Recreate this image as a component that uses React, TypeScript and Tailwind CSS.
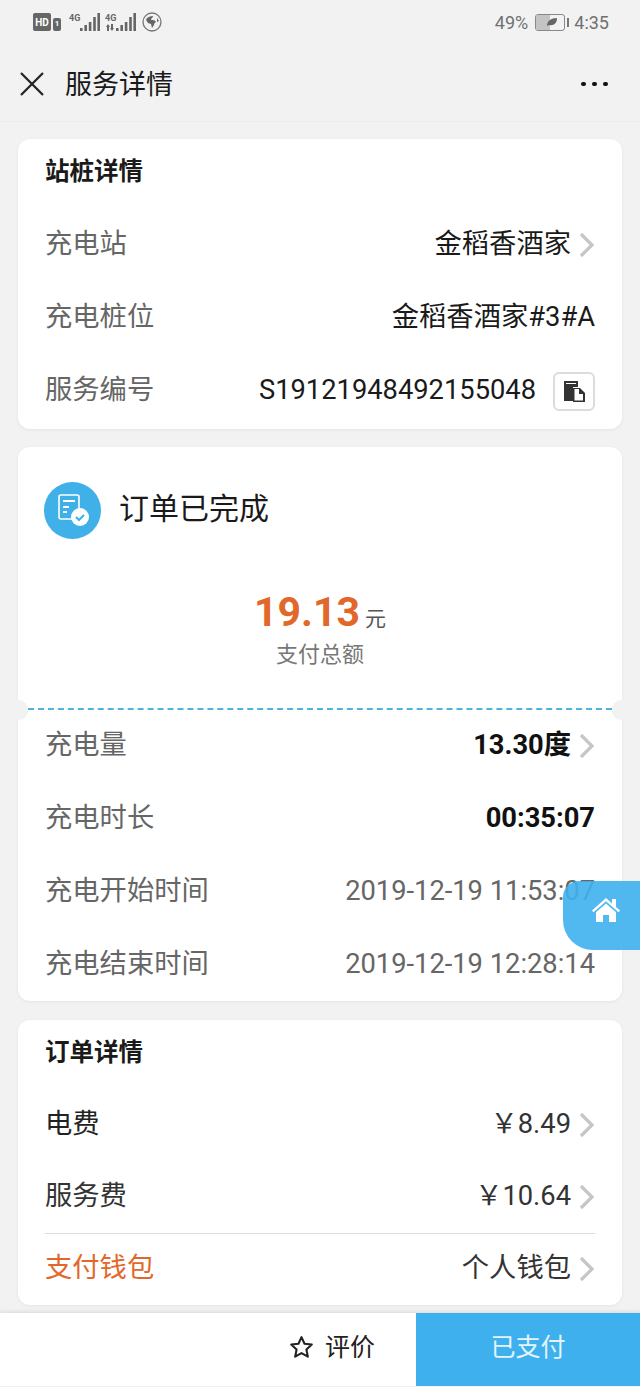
const font = "font-['Roboto','Noto_Sans_CJK_SC',sans-serif]";

function Chevron() {
  return (
    <svg width="16" height="26" viewBox="0 0 16 26" fill="none" className="ml-[8px] shrink-0">
      <path d="M2 2l11 11L2 24" stroke="#c4c6c8" strokeWidth="3.2" />
    </svg>
  );
}

function Row({ label, children, labelClass = "text-[#666]" }: { label: string; children: React.ReactNode; labelClass?: string }) {
  return (
    <div className="flex h-[73px] items-center justify-between">
      <span className={`text-[27.3px] ${labelClass}`}>{label}</span>
      <div className="flex items-center">{children}</div>
    </div>
  );
}

function Signal({ arrows }: { arrows?: boolean }) {
  return (
    <div className="relative h-[20px] w-[31px]">
      <span className="absolute left-0 top-[1px] text-[9px] font-bold leading-[10px] text-[#666]">4G</span>
      <svg width="31" height="20" viewBox="0 0 31 20" className="absolute left-0 top-0">
        {arrows && <path d="M3 12l2 3H4v4H2v-4H1zM7 19l-2-3h1v-4h2v4h1z" fill="#666" />}
        <path d="M11 16h2.6v3H11zM15.4 13H18v6h-2.6zM19.8 10h2.6v9h-2.6zM24.2 5h2.6v14h-2.6zM28.4 1H31v18h-2.6z" fill="#666" />
      </svg>
    </div>
  );
}

function StatusBar() {
  return (
    <div className="flex h-[44px] items-center justify-between pl-[33px] pr-[31px]">
      <div className="flex items-center">
        <div className="flex h-[18px] w-[18px] items-center justify-center rounded-[2px] bg-[#666] text-[10px] font-bold text-white">HD</div>
        <div className="ml-[2px] mt-[4px] flex h-[13px] w-[8px] items-center justify-center rounded-[2px] bg-[#666] text-[8px] font-bold text-white">1</div>
        <div className="ml-[8px]"><Signal /></div>
        <div className="ml-[5px]"><Signal arrows /></div>
        <svg width="20" height="20" viewBox="0 0 20 20" fill="none" className="ml-[6px]">
          <circle cx="10" cy="10" r="9" stroke="#777" strokeWidth="1.3" />
          <path d="M4 8c1-3 4-4 7-4 0 2-2 2-2 4 2 0 4 0 5 2-1 1-2 1-2 3l-2 3-1-4-3-1z" fill="#666" />
          <path d="M15 6l2 3-2 1z" fill="#666" />
        </svg>
      </div>
      <div className="flex items-center text-[18px] text-[#707070]">
        <span>49%</span>
        <div className="relative ml-[7px] h-[17px] w-[30px] overflow-hidden rounded-[3px] border border-[#888]">
          <div className="h-full w-[50%] bg-[#c4c4c4]" />
          <svg width="12" height="10" viewBox="0 0 12 10" className="absolute left-[10px] top-[2px]">
            <path d="M1 9C1 4 5 1 11 1c0 5-3 8-8 7z" fill="#666" />
          </svg>
        </div>
        <div className="ml-[2px] h-[9px] w-[2px] bg-[#777]" />
        <span className="ml-[5px]">4:35</span>
      </div>
    </div>
  );
}

function NavBar() {
  return (
    <div className="flex h-[78px] items-center justify-between border-b border-[#ebecee] pl-[20px] pr-[32px] pt-[2px]">
      <div className="flex items-center">
        <svg width="24" height="24" viewBox="0 0 24 24" fill="none">
          <path d="M1 1l22 22M23 1L1 23" stroke="#222" strokeWidth="2.2" />
        </svg>
        <span className="ml-[21px] mt-[3px] text-[27px] text-[#1a1a1a]">服务详情</span>
      </div>
      <div className="flex gap-[6px]">
        <div className="h-[4px] w-[5px] rounded-full bg-[#111]" />
        <div className="h-[4px] w-[5px] rounded-full bg-[#111]" />
        <div className="h-[4px] w-[5px] rounded-full bg-[#111]" />
      </div>
    </div>
  );
}

function OrderIcon() {
  return (
    <div className="ml-[-1px] flex h-[57px] w-[57px] shrink-0 items-center justify-center rounded-full bg-[#3fb0e8]">
      <svg width="34" height="34" viewBox="0 0 34 34" fill="none">
        <path d="M20 25H5a2 2 0 0 1-2-2V3a2 2 0 0 1 2-2h16a2 2 0 0 1 2 2v11" stroke="#fff" strokeWidth="1.6" />
        <path d="M7 7h12M7 13h6M7 18h4" stroke="#fff" strokeWidth="1.8" />
        <circle cx="24" cy="23" r="9" fill="#fff" />
        <path d="M20 23l3 3 5-5" stroke="#3fb0e8" strokeWidth="2" />
      </svg>
    </div>
  );
}

export default function App() {
  return (
    <div className={`relative h-[1387px] w-[640px] overflow-hidden bg-[#f2f2f3] ${font}`}>
      <StatusBar />
      <NavBar />

      <div className="mx-[18px] mt-[17px] h-[290px] rounded-[12px] bg-white px-[27px] pt-[15px] shadow-[0_1px_3px_#e2e4e6]">
        <div className="mb-[18px] h-[36px] text-[24.5px] font-bold leading-[36px] text-[#1a1a1a]">站桩详情</div>
        <Row label="充电站">
          <span className="text-[27.3px] text-[#1a1a1a]">金稻香酒家</span>
          <Chevron />
        </Row>
        <Row label="充电桩位">
          <span className="text-[27.3px] text-[#1a1a1a]">金稻香酒家#3#A</span>
        </Row>
        <Row label="服务编号">
          <span className="text-[27.3px] text-[#1a1a1a]">S19121948492155048</span>
          <div className="ml-[17px] mt-[2px] flex h-[39px] w-[42px] items-center justify-center rounded-[6px] border-2 border-[#dcdcdc]">
            <svg width="23" height="22" viewBox="0 0 23 22">
              <path d="M1 0h14v6H10v14H1z" fill="#333" />
              <path d="M3 2h10v1H3z" fill="#fff" />
              <path d="M10 7h7l5 5v9H10z" fill="#333" />
              <path d="M11.5 8h4.5v5h4v6.5h-8.5z" fill="#fff" />
            </svg>
          </div>
        </Row>
      </div>

      <div className="relative mx-[18px] mt-[18px] h-[554px] rounded-[12px] bg-white px-[27px] shadow-[0_1px_3px_#e2e4e6]">
        <div className="flex items-center pt-[35px]">
          <OrderIcon />
          <span className="mb-[4px] ml-[18px] text-[30px] text-[#1a1a1a]">订单已完成</span>
        </div>
        <div className="mt-[49px] flex items-baseline justify-center">
          <span className="text-[41px] font-bold leading-[48px] text-[#e2672a]">19.13</span>
          <span className="ml-[5px] text-[21px] text-[#555]">元</span>
        </div>
        <div className="mt-[3px] text-center text-[22px] leading-[32px] text-[#777]">支付总额</div>
        <div className="-mx-[17px] mt-[37px] h-[2px] border-t-2 border-dashed border-[#4db5dc]" />
        <div className="absolute left-[-8px] top-[253px] h-[20px] w-[18px] rounded-full bg-[#f2f2f3]" />
        <div className="absolute right-[-8px] top-[253px] h-[20px] w-[18px] rounded-full bg-[#f2f2f3]" />
        <div className="-mt-[1px]">
          <Row label="充电量">
            <span className="text-[27.3px] font-bold text-[#111]">13.30度</span>
            <Chevron />
          </Row>
          <Row label="充电时长">
            <span className="text-[27.3px] font-bold text-[#111]">00:35:07</span>
          </Row>
          <Row label="充电开始时间">
            <span className="text-[27.3px] text-[#666]">2019-12-19 11:53:07</span>
          </Row>
          <Row label="充电结束时间">
            <span className="text-[27.3px] text-[#666]">2019-12-19 12:28:14</span>
          </Row>
        </div>
      </div>

      <div className="mx-[18px] mt-[19px] h-[285px] rounded-[12px] bg-white px-[27px] pt-[15px] shadow-[0_1px_3px_#e2e4e6]">
        <div className="mb-[17px] h-[36px] text-[24.5px] font-bold leading-[36px] text-[#1a1a1a]">订单详情</div>
        <Row label="电费" labelClass="text-[#222]">
          <span className="text-[27.3px] text-[#333]">￥8.49</span>
          <Chevron />
        </Row>
        <div className="h-[73px] border-b border-[#ddd]">
          <div className="flex h-[71px] items-center justify-between">
            <span className="text-[27.3px] text-[#333]">服务费</span>
            <div className="flex items-center">
              <span className="text-[27.3px] text-[#333]">￥10.64</span>
              <Chevron />
            </div>
          </div>
        </div>
        <div className="-mt-[2px]">
          <Row label="支付钱包" labelClass="text-[#e2672a]">
            <span className="text-[27.3px] text-[#333]">个人钱包</span>
            <Chevron />
          </Row>
        </div>
      </div>

      <div className="mt-[8px] flex h-[73px] bg-white shadow-[0_-2px_3px_#dde0e2]">
        <div className="flex w-[416px] items-center justify-end pb-[4px] pr-[41px]">
          <svg width="25" height="25" viewBox="0 0 24 24" fill="none">
            <path d="M12 2l2.9 6.4 7 .8-5.2 4.7 1.4 6.9-6.1-3.4-6.1 3.4 1.4-6.9-5.2-4.7 7-.8z" stroke="#222" strokeWidth="2" strokeLinejoin="round" />
          </svg>
          <span className="ml-[11px] text-[25px] text-[#222]">评价</span>
        </div>
        <div className="flex w-[224px] items-center justify-center bg-[#3fb0ee] pb-[4px] text-[25px] text-[#e4f4fc]">已支付</div>
      </div>

      <div className="absolute left-[563px] top-[881px] flex h-[69px] w-[77px] items-center justify-center rounded-bl-[30px] rounded-tl-[16px] bg-[#3fb0ee]/90">
        <svg width="30" height="26" viewBox="0 0 30 26" className="mr-[-8px] mt-[-12px]">
          <path d="M15 1L1 13.5l1.5 1.7L15 4.2l12.5 11 1.5-1.7-4-3.6V2h-4v4.6z" fill="#fff" />
          <path d="M15 6.5L5 15.2V25h7v-7h6v7h7v-9.8z" fill="#fff" />
        </svg>
      </div>
    </div>
  );
}
